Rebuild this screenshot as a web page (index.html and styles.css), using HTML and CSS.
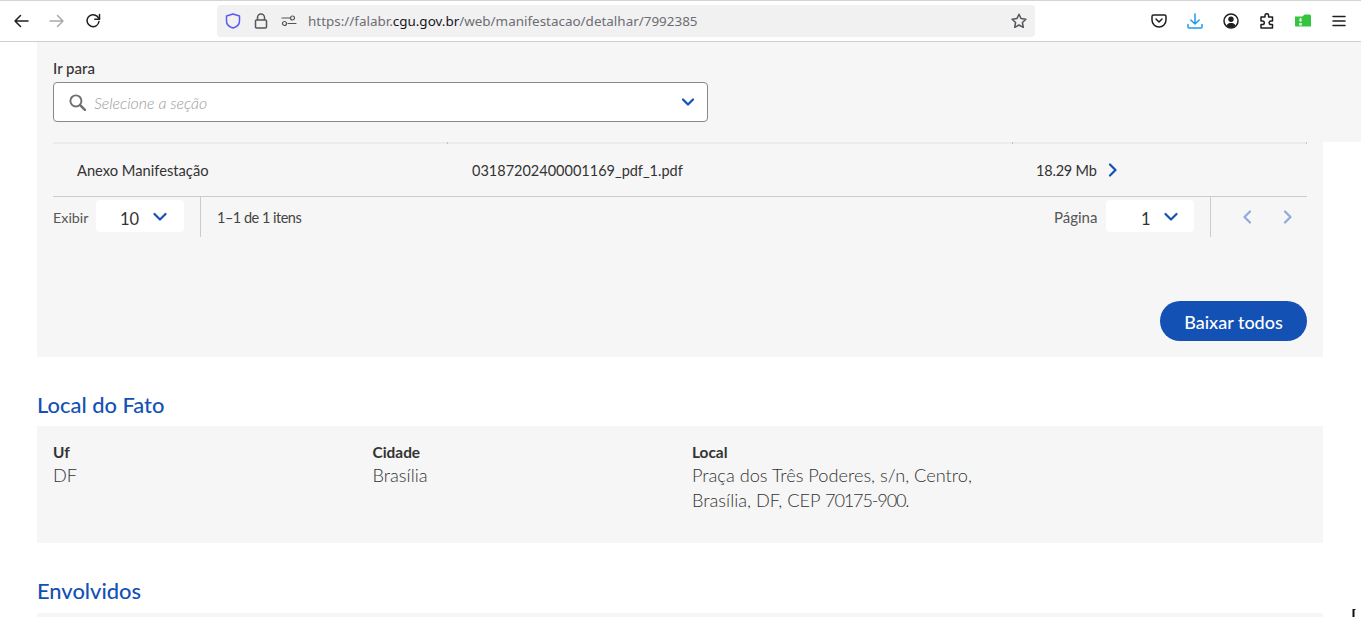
FILE: index.html
```html
<!DOCTYPE html>
<html lang="pt-BR">
<head>
<meta charset="utf-8">
<title>Fala.BR</title>
<link rel="stylesheet" href="styles.css">
</head>
<body>
<header class="toolbar">
  <div class="nav-group">
    <svg class="tb-icon" viewBox="0 0 16 16"><path d="M15 8H2M7.500 2.500 2 8l5.500 5.500" class="st dark"/></svg>
    <svg class="tb-icon" viewBox="0 0 16 16"><path d="M1 8h13M8.500 2.500 14 8l-5.500 5.500" class="st faint"/></svg>
    <svg class="tb-icon reload" viewBox="0 0 16 16"><path d="M14 8.500A6 6 0 1 1 12.300 3.400L14.500 6" class="st dark"/><path d="M14.500 1.500V6.300H9.800" class="st dark"/></svg>
  </div>
  <div class="urlbar">
    <svg class="ub-shield" viewBox="0 0 16 16"><path d="M8 1 14.500 3v5c0 3.500-3 6-6.500 7C4.500 14 1.500 11.500 1.500 8V3z" class="st shield"/></svg>
    <svg class="ub-lock" viewBox="0 0 16 16"><path d="M4.500 7V4.500a3.500 3.500 0 0 1 7 0V7M3.500 7h9a1 1 0 0 1 1 1v6a1 1 0 0 1-1 1h-9a1 1 0 0 1-1-1V8a1 1 0 0 1 1-1z" class="st grey"/></svg>
    <svg class="ub-perm" viewBox="0 0 16 16"><circle cx="3.500" cy="10.500" r="2" class="st grey thin"/><circle cx="11.500" cy="5" r="2" class="st grey thin"/><path d="M1 5h8M7 10.500h8" class="st grey thin"/></svg>
    <div class="url"><span>https://falabr.</span><b>cgu.gov.br</b><span>/web/manifestacao/detalhar/7992385</span></div>
    <svg class="ub-star" viewBox="0 0 16 16"><path d="M8 1.200 10.100 5.600 14.900 6.200 11.400 9.500 12.300 14.300 8 12 3.700 14.300 4.600 9.500 1.100 6.200 5.900 5.600z" class="st grey"/></svg>
  </div>
  <div class="tools">
    <svg class="tool pocket" viewBox="0 0 16 16"><path d="M2.500 2h11A1.500 1.500 0 0 1 15 3.500V7A7 7 0 0 1 1 7V3.500A1.500 1.500 0 0 1 2.500 2z" class="st dark"/><path d="M5 6l3 3 3-3" class="st dark"/></svg>
    <svg class="tool download" viewBox="0 0 16 16"><path d="M8 1v10M3.800 7 8 11l4.200-4M1 11.500V14a1 1 0 0 0 1 1h12a1 1 0 0 0 1-1v-2.500" class="st blue"/></svg>
    <svg class="tool account" viewBox="0 0 16 16"><circle cx="8" cy="8" r="7" class="st dark"/><circle cx="8" cy="6.200" r="2.700" class="fill-dark"/><path d="M3.500 12.500C4.500 10.500 6 10 8 10s3.500.5 4.500 2.500C11 14 10 14.500 8 14.500s-3-.5-4.500-2z" class="fill-dark"/></svg>
    <svg class="tool ext" viewBox="0 0 16 16"><path d="M6 2.500a1.800 1.800 0 0 1 3.600 0V4h3.900v4h-1.500a1.800 1.800 0 0 0 0 3.600h1.500V15H2v-3.500h1.500a1.800 1.800 0 0 0 0-3.600H2V4h4z" class="st dark"/></svg>
    <svg class="tool folder" viewBox="0 0 16 16"><path d="M0 3.500h7.500L9.500 1.500h5A1.500 1.500 0 0 1 16 3v10.500H1a1 1 0 0 1-1-1z" class="fill-green"/><path d="M4.600 5h1.800v2.200h1L5.500 9 3.600 7.200h1zM4.200 10h2.600v2.400H4.200z" class="fill-white"/></svg>
    <svg class="tool menu" viewBox="0 0 16 16"><path d="M2 3.500h12M2 8h12M2 12.500h12" class="st dark"/></svg>
  </div>
</header>

<main class="page">
  <section class="jump">
    <label class="jump-label">Ir para</label>
    <div class="select-box">
      <svg class="search-icon" viewBox="0 0 16 16"><circle cx="6.500" cy="6.500" r="5.200" class="st search"/><path d="M10.500 10.500 15 15" class="st search heavy"/></svg>
      <span class="placeholder">Selecione a seção</span>
      <svg class="chev" viewBox="0 0 14 10"><path d="M2 2.500 7 7.500 12 2.500" class="st brand heavy"/></svg>
    </div>
  </section>

  <section class="files">
    <div class="table-head"><i></i><i></i><i></i></div>
    <div class="table-row">
      <div class="cell first">Anexo Manifestação</div>
      <div class="cell file-name">03187202400001169_pdf_1.pdf</div>
      <div class="cell size">18.29 Mb
        <svg class="row-chev" viewBox="0 0 10 14"><path d="M2 1.500 7.500 7 2 12.500" class="st brand heavy"/></svg>
      </div>
    </div>
    <div class="pager">
      <div class="pager-left">
        <span class="pager-label exibir">Exibir</span>
        <div class="pager-select wide"><span class="num">10</span><svg class="chev small" viewBox="0 0 14 10"><path d="M1.500 2 7 7.500 12.500 2" class="st brand heavy"/></svg></div>
      </div>
      <div class="pager-count">1–1 de 1 itens</div>
      <div class="pager-right">
        <span class="pager-label pagina">Página</span>
        <div class="pager-select page-sel"><span class="num">1</span><svg class="chev small" viewBox="0 0 14 10"><path d="M1.500 2 7 7.500 12.500 2" class="st brand heavy"/></svg></div>
      </div>
      <div class="pager-arrows">
        <svg class="pg-arrow" viewBox="0 0 10 14"><path d="M8 1.500 2.500 7 8 12.500" class="st brand heavy"/></svg>
        <svg class="pg-arrow" viewBox="0 0 10 14"><path d="M2 1.500 7.500 7 2 12.500" class="st brand heavy"/></svg>
      </div>
    </div>
    <div class="actions"><button class="btn-primary">Baixar todos</button></div>
  </section>

  <h2 class="section-title first-title">Local do Fato</h2>
  <section class="info">
    <div class="field">
      <div class="field-label">Uf</div>
      <div class="field-value">DF</div>
    </div>
    <div class="field">
      <div class="field-label">Cidade</div>
      <div class="field-value">Brasília</div>
    </div>
    <div class="field">
      <div class="field-label">Local</div>
      <div class="field-value">Praça dos Três Poderes, s/n, Centro,<br>Brasília, DF, CEP <span class="zip">70175-900.</span></div>
    </div>
  </section>

  <h2 class="section-title second-title">Envolvidos</h2>
  <section class="info-next"></section>
</main>
<svg class="cursor" viewBox="0 0 6 8"><path d="M1.500 0h3v1h-1v7h-2z" class="fill-black"/></svg>
</body>
</html>
```
FILE: styles.css
```css
* { box-sizing: border-box; }
html, body { margin: 0; padding: 0; }
body {
  width: 1361px;
  height: 617px;
  overflow: hidden;
  background: #fff;
  font-family: "Lato", "Liberation Sans", sans-serif;
  color: #333;
  position: relative;
}

/* svg helpers */
.st { fill: none; stroke-width: 1.5; stroke-linecap: round; stroke-linejoin: round; }
.dark { stroke: #1f1f22; }
.faint { stroke: #a9a9ac; }
.grey { stroke: #55555a; }
.thin { stroke-width: 1.2; }
.shield { stroke: #5a5cf0; }
.blue { stroke: #1f9bea; }
.search { stroke: #6e6e6e; stroke-width: 1.8; }
.brand { stroke: #1351b4; }
.heavy { stroke-width: 2.2; }
.fill-dark { fill: #1f1f22; }
.fill-green { fill: #35c43f; }
.fill-white { fill: #e8f8e8; }
.fill-black { fill: #111; }

/* browser toolbar */
.toolbar {
  height: 42px;
  display: flex;
  align-items: center;
  border-top: 1px solid #d4d4d4;
  border-bottom: 1px solid #cfcfcf;
  background: #fff;
  padding-left: 13px;
}
.nav-group { display: flex; gap: 20px; width: 204px; }
.tb-icon { width: 16px; height: 16px; }
.urlbar {
  width: 818px;
  height: 32px;
  background: #f1f1f2;
  border-radius: 4px;
  display: flex;
  align-items: center;
  padding-left: 8px;
}
.ub-shield { width: 16px; height: 16px; }
.ub-lock { width: 16px; height: 16px; margin-left: 12px; }
.ub-perm { width: 16px; height: 16px; margin-left: 12px; }
.url {
  margin-left: 11px;
  flex: 1;
  font-family: "Noto Sans", sans-serif;
  font-size: 13.450px;
  color: #6d6d72;
  white-space: nowrap;
}
.url b { font-weight: 400; color: #15141a; }
.ub-star { width: 16px; height: 16px; margin-right: 8px; }
.tools { display: flex; margin-left: 116px; gap: 20px; align-items: center; }
.tool { width: 16px; height: 16px; }

/* page */
.page { padding: 0 38px 0 37px; }

.jump {
  margin-right: -38px;
  height: 100px;
  background: #f6f6f6;
  padding: 17px 0 0 16px;
}
.jump-label {
  display: block;
  font-size: 15px;
  font-weight: 500;
  line-height: 18px;
  color: #333;
}
.select-box {
  margin-top: 5px;
  width: 655px;
  height: 40px;
  background: #fff;
  border: 1px solid #888;
  border-radius: 4px;
  display: flex;
  align-items: center;
  padding: 0 12px 0 15px;
}
.search-icon { width: 17px; height: 17px; }
.placeholder {
  margin-left: 8px;
  flex: 1;
  font-style: italic;
  font-weight: 300;
  font-size: 15.900px;
  color: #9a9a9a;
}
.chev { width: 14px; height: 10px; }

.files {
  height: 215px;
  background: #f6f6f6;
  padding: 0 16px;
}
.table-head {
  height: 2px;
  background: #ececec;
  display: grid;
  grid-template-columns: 395px 565px 1fr;
}
.table-head i { border-right: 1px solid #c4c4c4; height: 2px; }
.table-row {
  height: 53px;
  display: grid;
  grid-template-columns: 395px 565px 1fr;
  align-items: center;
  border-bottom: 1px solid #ccc;
  font-size: 14.700px;
  color: #333;
}
.cell { padding-left: 24px; white-space: nowrap; }
.file-name { font-size: 14.500px; }
.size { display: flex; align-items: center; gap: 11px; padding-left: 23px; font-size: 14.500px; letter-spacing: -.2px; }
.row-chev { width: 10px; height: 14px; }

.pager { display: flex; height: 40px; align-items: stretch; font-size: 14.300px; }
.pager-left { display: flex; align-items: center; width: 148px; border-right: 1px solid #ccc; }
.pager-label { color: #555; }
.exibir { width: 35px; }
.pagina { width: 44px; font-size: 15px; }
.pager-select {
  height: 32px;
  background: #fff;
  border-radius: 4px;
  display: flex;
  align-items: center;
  margin-left: 8px;
  margin-top: -2px;
}
.wide { width: 88px; padding-left: 24px; gap: 14px; }
.page-sel { width: 88px; padding-left: 35px; gap: 13px; }
.num { font-size: 16.500px; color: #333; line-height: 1; padding-top: 6px; }
.chev.small { width: 14px; height: 10px; margin-top: 2px; }
.pager-count { display: flex; align-items: center; padding-left: 16px; flex: 1; color: #444; font-size: 14.500px; letter-spacing: -.5px; }
.pager-right { display: flex; align-items: center; border-right: 1px solid #ccc; padding-right: 16px; }
.pager-arrows { display: flex; width: 96px; align-items: center; justify-content: space-between; padding: 0 14px 0 31px; opacity: .45; }
.pg-arrow { width: 10px; height: 14px; }

.actions { display: flex; justify-content: flex-end; margin-top: 64px; }
.btn-primary {
  width: 147px;
  height: 40px;
  border: 0;
  border-radius: 20px;
  background: #1351b4;
  color: #fff;
  font-family: inherit;
  font-size: 18px;
  font-weight: 500;
  padding: 2px 0 0;
}

.section-title {
  margin: 0;
  font-size: 21.900px;
  line-height: 26px;
  font-weight: 500;
  color: #1351b4;
}
.first-title { margin-top: 35px; }
.second-title { margin-top: 35px; }

.info {
  margin-top: 8px;
  height: 117px;
  background: #f6f6f6;
  display: grid;
  grid-template-columns: 319.500px 319.500px 1fr;
  padding: 16px 16px 0;
}
.field-label { font-size: 15.400px; font-weight: 700; line-height: 20px; color: #333; }
.field-value { font-size: 18.200px; line-height: 25px; color: #333; font-weight: 300; margin-top: 1px; }
.zip { letter-spacing: -1.200px; }
.info-next { margin-top: 9px; height: 10px; background: #f6f6f6; }

.cursor { position: absolute; left: 1351px; top: 609px; width: 6px; height: 8px; }
```
